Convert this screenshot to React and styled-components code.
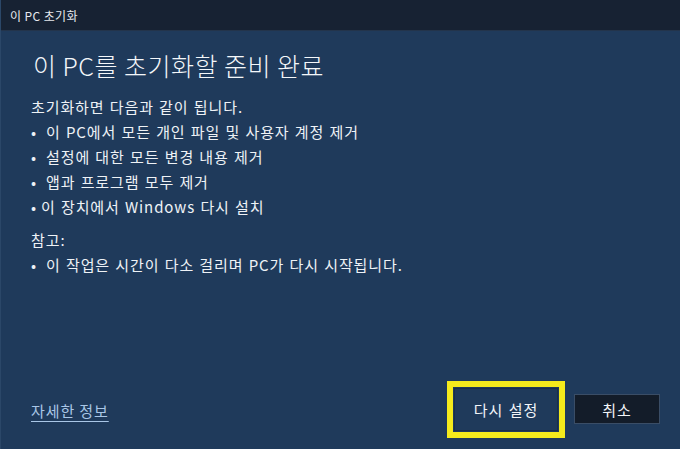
import React from 'react';
import styled, {createGlobalStyle} from 'styled-components';

const Global = createGlobalStyle`
  html, body {
    margin: 0;
    padding: 0;
    background: #1f3a5b;
  }
  * { box-sizing: border-box; }
`

const App = () => (
    <>
        <Global/>
        <Window>
            <TitleBar>이 PC 초기화</TitleBar>
            <Body>
                <Heading>이 PC를 초기화할 준비 완료</Heading>
                <Text>초기화하면 다음과 같이 됩니다.</Text>
                <List>
                    <Item $wide>이 PC에서 모든 개인 파일 및 사용자 계정 제거</Item>
                    <Item $wide>설정에 대한 모든 변경 내용 제거</Item>
                    <Item $wide>앱과 프로그램 모두 제거</Item>
                    <Item>이 장치에서 Windows 다시 설치</Item>
                </List>
                <Note>참고:</Note>
                <List>
                    <Item $wide>이 작업은 시간이 다소 걸리며 PC가 다시 시작됩니다.</Item>
                </List>
            </Body>
            <Footer>
                <Link>자세한 정보</Link>
                <Buttons>
                    <Highlight>
                        <Button>다시 설정</Button>
                    </Highlight>
                    <Button $dark>취소</Button>
                </Buttons>
            </Footer>
        </Window>
    </>
)

const font = `"Noto Sans CJK KR", "Noto Sans", sans-serif`

const Window = styled.div`
  width: 680px;
  height: 449px;
  display: flex;
  flex-direction: column;
  background: #1f3a5b;
  border-left: 1px solid #2b4768;
  color: #eef2f6;
  font-family: ${font};
  overflow: hidden;
`

const TitleBar = styled.div`
  height: 31px;
  background: #172233;
  border-bottom: 1px solid #23344b;
  display: flex;
  align-items: center;
  padding-left: 9px;
  font-size: 12px;
  letter-spacing: 0.4px;
  color: #e6e9ee;
`

const Body = styled.div`
  flex: 1;
  padding: 14px 0 0 30px;
`

const Heading = styled.h1`
  margin: 0 0 9px 2px;
  font-size: 25px;
  font-weight: 300;
  line-height: 40px;
  letter-spacing: 0.5px;
  color: #f4f7fa;
`

const Text = styled.div`
  font-size: 15px;
  line-height: 25px;
  letter-spacing: 0.9px;
  word-spacing: 1px;
`

const List = styled.ul`
  list-style: none;
  margin: 0;
  padding: 0;
`

const Item = styled.li`
  font-size: 15px;
  line-height: 25px;
  letter-spacing: 0.9px;
  word-spacing: 1px;
  display: flex;

  &::before {
    content: '•';
    width: ${p => p.$wide ? '15px' : '10px'};
    flex-shrink: 0;
    letter-spacing: 0;
  }
`

const Note = styled(Text)`
  margin-top: 8px;
`

const Footer = styled.div`
  height: 86px;
  display: flex;
  align-items: center;
  justify-content: space-between;
  padding: 0 20px 6px 30px;
`

const Link = styled.a`
  font-size: 15px;
  letter-spacing: 0.9px;
  color: #a9c6e6;
  text-decoration: underline;
  text-underline-offset: 4px;
  margin-top: 14px;
`

const Buttons = styled.div`
  display: flex;
  align-items: center;
  gap: 9px;
  margin-top: 12px;
`

const Highlight = styled.div`
  border: 6px solid #f5eb1c;
  padding: 1px;
`

const Button = styled.button`
  width: ${p => p.$dark ? '86px' : '104px'};
  height: ${p => p.$dark ? '30px' : '43px'};
  font-family: ${font};
  font-size: 15px;
  letter-spacing: 1px;
  word-spacing: 1px;
  color: #f2f5f8;
  background: ${p => p.$dark ? '#131c29' : '#1f3a5b'};
  border: 1px solid ${p => p.$dark ? '#3a4d66' : '#1a2f4a'};
  padding: 0;
`

export default App;
